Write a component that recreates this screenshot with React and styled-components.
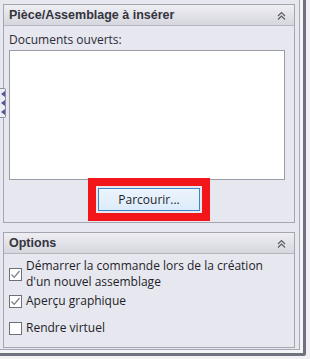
import React from 'react';
import styled, { createGlobalStyle } from 'styled-components';

const Global = createGlobalStyle`
  html, body {
    margin: 0;
    padding: 0;
    background: #f1f1f5;
  }
  body {
    font-family: "Open Sans", "Liberation Sans", sans-serif;
    font-size: 12px;
    color: #1e1e28;
  }
`;

const Frame = styled.div`
  position: relative;
  box-sizing: border-box;
  width: 306px;
  height: 356px;
  padding: 4px 9px 0 3px;
  background: #e6e7ef;
  border-right: 3px solid #6f717e;
  border-bottom: 3px solid #6f717e;
  border-bottom-right-radius: 3px;
  box-shadow: inset -3px -3px 0 #f4f4f8, inset -4px -4px 0 #a6a8b4;
`;

const Group = styled.div`
  box-sizing: border-box;
  width: 292px;
  height: ${(p) => p.h}px;
  margin-bottom: ${(p) => p.mb || 0}px;
  border: 1px solid #a3a5b0;
  background: #e6e7ef;
  overflow: hidden;
`;

const Header = styled.div`
  display: flex;
  align-items: center;
  justify-content: space-between;
  height: 20px;
  padding: 0 8px 0 5px;
  border-bottom: 1px solid #b4b6c0;
  background: linear-gradient(#eeeef3, #d6d7de);
  font-family: "Liberation Sans", Arial, sans-serif;
  font-size: 12.5px;
  font-weight: bold;
  color: #34343e;
`;

const Body = styled.div`
  display: flex;
  flex-direction: column;
  padding: 5px 9px 0 5px;
`;

const Label = styled.div`
  height: 18px;
  line-height: 18px;
  color: #2c2c36;
`;

const ListBox = styled.div`
  margin-top: 1px;
  height: 128px;
  background: #fff;
  border: 1px solid #9a9ca6;
`;

const Highlight = styled.div`
  align-self: center;
  margin-top: -2px;
  margin-left: 4px;
  padding: 2px;
  border: 8px solid #f2161a;
`;

const Button = styled.button`
  width: 102px;
  height: 23px;
  padding: 0;
  border: 1px solid #3a86c8;
  background: linear-gradient(#ecf4fc, #dcecfb);
  font-family: inherit;
  font-size: 12px;
  color: #1e1e28;
`;

const OptionList = styled.div`
  display: flex;
  flex-direction: column;
  padding: 4px 5px 0 5px;
`;

const Option = styled.label`
  display: flex;
  align-items: center;
  gap: 4px;
  line-height: 16px;
  min-height: 22px;
  margin-top: ${(p) => p.mt || 0}px;
`;

const Box = styled.span`
  flex: none;
  width: 13px;
  height: 13px;
  box-sizing: border-box;
  border: 1px solid #6f6f78;
  background: #fff;
  display: flex;
  align-items: center;
  justify-content: center;
`;

const Tab = styled.div`
  position: absolute;
  left: 0;
  top: 88px;
  width: 6px;
  height: 30px;
  box-sizing: border-box;
  border: 1px solid #8c8ea0;
  border-left: none;
  border-radius: 0 2px 2px 0;
  background: #eceef4;
  display: flex;
  flex-direction: column;
  justify-content: space-around;
  align-items: center;
`;

const Chevrons = () => (
  <svg width="9" height="9" viewBox="0 0 9 9">
    <path d="M1 5 L4.5 1.5 L8 5 M1 8.5 L4.5 5 L8 8.5" fill="none" stroke="#5a5c68" strokeWidth="1.2" />
  </svg>
);

const Check = ({ on }) => (
  <Box>
    {on && (
      <svg width="11" height="11" viewBox="0 0 11 11">
        <path d="M1.5 5.5 L4.2 8.3 L9.5 2" fill="none" stroke="#7a7a82" strokeWidth="1.2" />
      </svg>
    )}
  </Box>
);

const Arrow = () => (
  <svg width="4" height="6" viewBox="0 0 4 6">
    <path d="M4 0 L0 3 L4 6 Z" fill="#55579a" />
  </svg>
);

export default function App() {
  return (
    <>
      <Global />
      <Frame>
        <Tab>
          <Arrow />
          <Arrow />
          <Arrow />
        </Tab>
        <Group h={219} mb={9}>
          <Header>
            <span>Pièce/Assemblage à insérer</span>
            <Chevrons />
          </Header>
          <Body>
            <Label>Documents ouverts:</Label>
            <ListBox />
            <Highlight>
              <Button>Parcourir...</Button>
            </Highlight>
          </Body>
        </Group>
        <Group h={116}>
          <Header>
            <span>Options</span>
            <Chevrons />
          </Header>
          <OptionList>
            <Option>
              <Check on />
              <span>Démarrer la commande lors de la création<br />d'un nouvel assemblage</span>
            </Option>
            <Option>
              <Check on />
              <span>Aperçu graphique</span>
            </Option>
            <Option mt={5}>
              <Check />
              <span>Rendre virtuel</span>
            </Option>
          </OptionList>
        </Group>
      </Frame>
    </>
  );
}
